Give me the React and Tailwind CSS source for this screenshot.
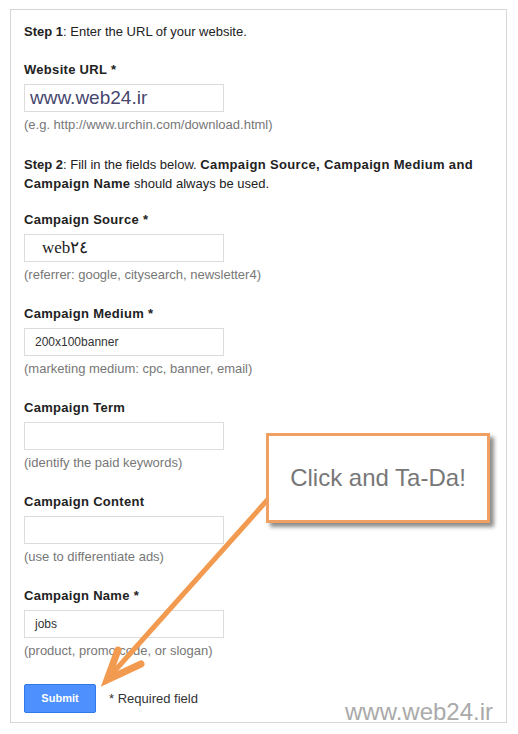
import React from 'react';

const fields = [
  { label: 'Campaign Source', required: true, value: 'web٢٤', hint: '(referrer: google, citysearch, newsletter4)', kind: 'serif' },
  { label: 'Campaign Medium', required: true, value: '200x100banner', hint: '(marketing medium: cpc, banner, email)' },
  { label: 'Campaign Term', value: '', hint: '(identify the paid keywords)' },
  { label: 'Campaign Content', value: '', hint: '(use to differentiate ads)' },
  { label: 'Campaign Name', required: true, value: 'jobs', hint: '(product, promo code, or slogan)' },
];

const Field = ({ label, required, value, hint, kind, first }) => (
  <div className={first ? 'mt-[22px]' : 'mt-[23px]'}>
    <p className="h-4 leading-4 font-bold tracking-[0.3px] text-[#222]">
      {label}{required && ' *'}
    </p>
    <div className="mt-[6px] flex h-[28px] w-[200px] items-center border border-[#dcdcdc] bg-white">
      {kind === 'url' && (
        <span className="pl-[5px] text-[19px] text-[#47476e]">{value}</span>
      )}
      {kind === 'serif' && (
        <span className="pl-[17px] text-[17px] text-[#222]" style={{ fontFamily: '"Liberation Serif", "DejaVu Serif", serif' }}>
          {value}
        </span>
      )}
      {!kind && <span className="pl-[10px] text-[12px] text-[#333]">{value}</span>}
    </div>
    <p className="mt-[5px] h-4 leading-4 text-[#777]">{hint}</p>
  </div>
);

export default function App() {
  return (
    <div
      className="relative h-[734px] w-[518px] bg-white text-[13px]"
      style={{ fontFamily: '"Liberation Sans", Arial, sans-serif' }}
    >
      <div className="absolute left-[10px] top-[9px] h-[714px] w-[497px] border border-[#d6d6d6]" />

      <div className="relative px-[24px] pt-[24px]">
        <p className="h-4 leading-4 text-[#222]">
          <span className="font-bold">Step 1</span>: Enter the URL of your website.
        </p>

        <Field first label="Website URL" required value="www.web24.ir" kind="url" hint="(e.g. http://www.urchin.com/download.html)" />

        <p className="mt-[22px] w-[465px] leading-[19px] text-[#222]">
          <span className="font-bold">Step 2</span>: Fill in the fields below.{' '}
          <span className="font-bold tracking-[0.35px]">Campaign Source, Campaign Medium and Campaign Name</span> should always be used.
        </p>

        <div className="-mt-[4px]">
          {fields.map((f) => (
            <Field key={f.label} {...f} />
          ))}
        </div>

        <div className="mt-[25px] flex items-center gap-[13px]">
          <button className="h-[29px] w-[72px] rounded-[2px] border border-[#3079ed] bg-[#4d90fe] text-[11px] font-bold text-white">
            Submit
          </button>
          <span className="text-[#333]">* Required field</span>
        </div>
      </div>

      <span className="absolute left-[345px] top-[698px] text-[24px] leading-7 text-[#aaa]">www.web24.ir</span>

      <svg className="pointer-events-none absolute left-0 top-0" width="518" height="734" viewBox="0 0 518 734">
        <line x1="270" y1="497" x2="111" y2="675" stroke="#f29b50" strokeWidth="5" strokeLinecap="round" />
        <polyline points="118,650 107,680 141,664" fill="none" stroke="#f29b50" strokeWidth="7" strokeLinejoin="miter" strokeLinecap="round" />
      </svg>

      <div className="absolute left-[266px] top-[433px] flex h-[90px] w-[224px] items-center justify-center border-[3px] border-[#f0a062] bg-white shadow-[4px_4px_4px_rgba(0,0,0,0.45)]">
        <span className="text-[24px] text-[#777]">Click and Ta-Da!</span>
      </div>
    </div>
  );
}
